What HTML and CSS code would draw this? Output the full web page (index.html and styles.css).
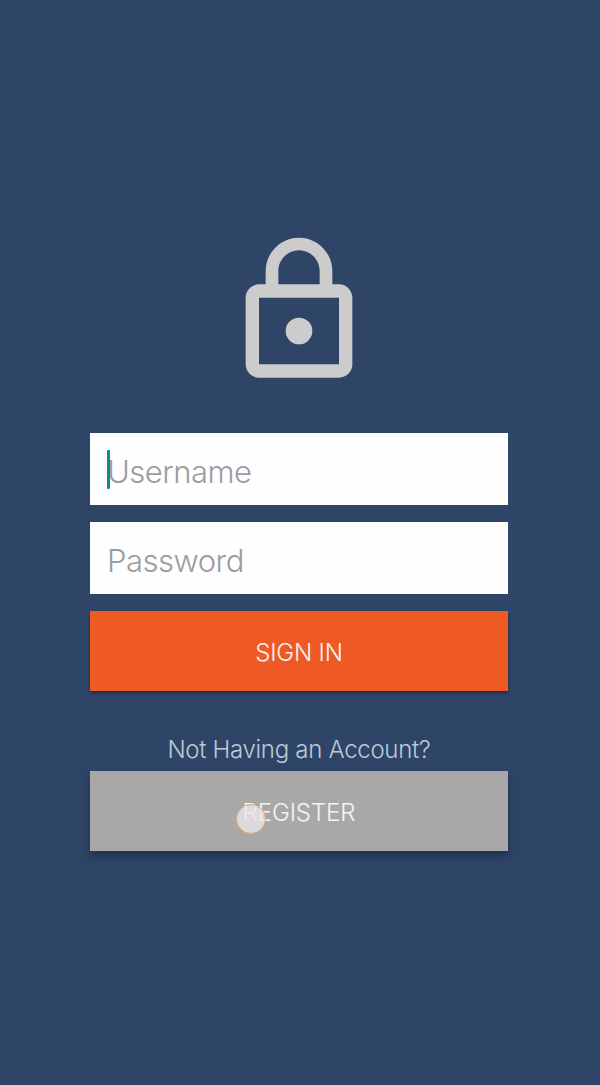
FILE: index.html
```html
<!DOCTYPE html>
<html lang="en">
<head>
<meta charset="utf-8">
<title>Sign in</title>
<link rel="stylesheet" href="styles.css">
</head>
<body>
<main class="login">
  <svg class="lock" viewBox="0 0 24 24" aria-hidden="true">
    <path fill-rule="evenodd" d="M18 8h-1V6c0-2.76-2.24-5-5-5S7 3.24 7 6v2H6c-1.1 0-2 .9-2 2v10c0 1.1.9 2 2 2h12c1.1 0 2-.9 2-2V10c0-1.1-.9-2-2-2zM8.9 6c0-1.71 1.39-3.1 3.1-3.1s3.1 1.39 3.1 3.1v2H8.9zM18 20H6V10h12z"/>
    <circle cx="12" cy="15" r="2"/>
  </svg>
  <div class="field"><span class="placeholder">Username</span><span class="caret"></span></div>
  <div class="field"><span class="placeholder">Password</span></div>
  <div class="button signin" role="button"><span>SIGN IN</span></div>
  <p class="hint"><span>Not Having an Account?</span></p>
  <div class="button register" role="button"><span>REGISTER</span><span class="touch"></span></div>
</main>
</body>
</html>
```
FILE: styles.css
```css
body {
  margin: 0;
  background: #2f4567;
  font-family: Inter, "Liberation Sans", sans-serif;
  font-weight: 300;
}
.login {
  box-sizing: border-box;
  display: flex;
  flex-direction: column;
  width: 598px;
  height: 1085px;
  padding: 231px 90px 0;
}
.lock {
  width: 160px;
  height: 160px;
  margin-bottom: 42px;
  align-self: center;
  fill: #cccccd;
}
.field {
  position: relative;
  display: flex;
  align-items: center;
  height: 72px;
  margin-bottom: 17px;
  padding-left: 17px;
  background: #fefeff;
  box-sizing: border-box;
}
.placeholder {
  font-size: 31px;
  line-height: 40px;
  letter-spacing: -0.5px;
  color: #9b9c9f;
  padding-top: 5px;
}
.caret {
  position: absolute;
  left: 17px;
  top: 17px;
  width: 3px;
  height: 39px;
  border-radius: 1px;
  background: #079184;
}
.button {
  position: relative;
  display: flex;
  align-items: center;
  justify-content: center;
  height: 80px;
  font-size: 24px;
  line-height: 30px;
  letter-spacing: -0.2px;
  color: #f7f3f3;
}
.button span:first-child {
  padding-top: 3px;
}
.signin {
  background: #ef5a24;
  box-shadow: 0 2px 3px rgba(15, 25, 45, .6);
}
.hint {
  margin: 43px 0 6px;
  font-size: 24px;
  line-height: 31px;
  letter-spacing: -0.3px;
  text-align: center;
  color: #bdcad9;
}
.register {
  background: #a9a8a9;
  box-shadow: 0 5px 8px rgba(20, 35, 65, .6);
  letter-spacing: -0.1px;
}
.register span:first-child {
  padding-top: 4px;
}
.touch {
  position: absolute;
  left: 146px;
  top: 33px;
  width: 28px;
  height: 28px;
  border: 1px solid #e9a66f;
  border-radius: 50%;
  background: rgba(232, 230, 234, .8);
}
```
